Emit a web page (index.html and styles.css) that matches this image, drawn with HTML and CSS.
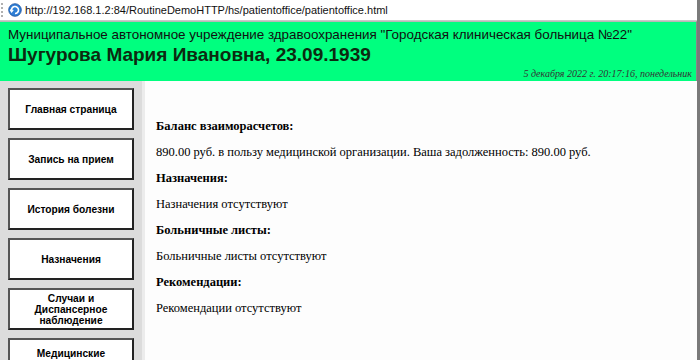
FILE: index.html
```html
<!DOCTYPE html>
<html lang="ru">
<head>
    <meta charset="UTF-8">
    <title>Личный кабинет пациента</title>
    <link rel="stylesheet" href="styles.css">
</head>
<body>
    <div class="addressbar">
        <span class="grip"></span>
        <svg class="page-icon" width="14" height="14" viewBox="0 0 14 14">
            <circle cx="7" cy="7" r="6.3" fill="#2f7fd6" stroke="#1a4f9a" stroke-width="0.8"/>
            <path d="M3.6 7.8 A3.5 3.5 0 1 1 7 10.5" fill="none" stroke="#fff" stroke-width="1.6"/>
            <path d="M2.2 6.6 L3.6 8.8 L5.2 6.9" fill="none" stroke="#fff" stroke-width="1.3"/>
        </svg>
        <span class="url">http://192.168.1.2:84/RoutineDemoHTTP/hs/patientoffice/patientoffice.html</span>
    </div>

    <header class="header">
        <div class="org">Муниципальное автономное учреждение здравоохранения "Городская клиническая больница №22"</div>
        <div class="patient">Шугурова Мария Ивановна, 23.09.1939</div>
        <div class="date">5 декабря 2022 г. 20:17:16, понедельник</div>
    </header>

    <div class="layout">
        <nav class="sidebar">
            <a class="nav-btn" href="#">Главная страница</a>
            <a class="nav-btn" href="#">Запись на прием</a>
            <a class="nav-btn" href="#">История болезни</a>
            <a class="nav-btn" href="#">Назначения</a>
            <a class="nav-btn" href="#">Случаи и Диспансерное наблюдение</a>
            <a class="nav-btn" href="#">Медицинские документы</a>
        </nav>

        <main class="content">
            <p class="title">Баланс взаиморасчетов:</p>
            <p>890.00 руб. в пользу медицинской организации. Ваша задолженность: 890.00 руб.</p>
            <p class="title">Назначения:</p>
            <p>Назначения отсутствуют</p>
            <p class="title">Больничные листы:</p>
            <p>Больничные листы отсутствуют</p>
            <p class="title">Рекомендации:</p>
            <p>Рекомендации отсутствуют</p>
        </main>
    </div>
</body>
</html>
```

FILE: styles.css
```css
html, body {
    margin: 0;
    padding: 0;
    height: 360px;
    overflow: hidden;
    background: #fdfdfd;
}

body {
    border-right: 3px solid #7a7a7a;
    box-sizing: border-box;
    font-family: 'Liberation Sans', Arial, sans-serif;
}

/* Address bar */
.addressbar {
    height: 20px;
    display: flex;
    align-items: center;
    background: #fff;
    border-bottom: 1px solid #c9c9c9;
}

.grip {
    width: 2px;
    height: 14px;
    margin: 0 3px 0 1px;
    border-left: 2px dotted #b0b0b0;
}

.page-icon {
    margin-right: 3px;
}

.url {
    font-size: 11px;
    color: #111;
}

/* Header */
.header {
    background: #00ff7f;
    border-top: 1px solid #b8b8b8;
    border-right: 1px solid #8a8a8a;
    padding: 4px 8px 2px 8px;
    height: 53px;
}

.org {
    font-size: 13.4px;
    color: #101010;
    line-height: 17px;
}

.patient {
    font-size: 19px;
    font-weight: bold;
    color: #0c2a10;
    line-height: 24px;
}

.date {
    text-align: right;
    font-family: 'Liberation Serif', 'Times New Roman', serif;
    font-style: italic;
    font-size: 10px;
    color: #333;
    line-height: 12px;
    margin-top: 1px;
    margin-right: -4px;
}

/* Main layout */
.layout {
    display: flex;
    height: 280px;
}

.sidebar {
    width: 145px;
    flex-shrink: 0;
    background: #dcdcdc;
    border-right: 3px solid #ececec;
    padding: 7px 8px 0 8px;
    box-sizing: border-box;
    display: flex;
    flex-direction: column;
    gap: 8px;
}

.nav-btn {
    display: flex;
    align-items: center;
    justify-content: center;
    text-align: center;
    height: 42px;
    flex-shrink: 0;
    box-sizing: border-box;
    padding: 0 10px;
    background: #fff;
    border: 2px solid #333;
    border-color: #555 #222 #222 #555;
    color: #000;
    font-size: 10.2px;
    font-weight: bold;
    line-height: 11px;
    text-decoration: none;
}

.content {
    flex: 1;
    padding: 37px 10px 0 11px;
    background: #fdfdfd;
    font-family: 'Liberation Serif', 'Times New Roman', serif;
    font-size: 12.5px;
    color: #000;
}

.content p {
    margin: 0 0 10px 0;
    line-height: 16px;
}

.content .title {
    font-weight: bold;
}
```
